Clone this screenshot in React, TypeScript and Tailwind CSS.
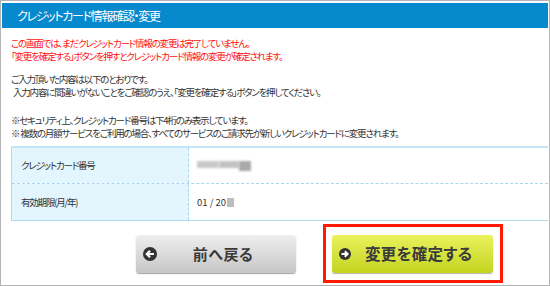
export default function App() {
  return (
    <div className="w-[550px] h-[286px] box-border border border-[#b4b4b4] px-px pt-[2px] bg-white overflow-hidden [font-family:'Noto_Sans_CJK_JP','Noto_Sans',sans-serif] [font-feature-settings:'palt']">
      {/* header */}
      <div className="h-[25px] bg-[#0789cd] flex items-center pl-[15px] text-white text-[12px] tracking-[-1.3px]">
        クレジットカード情報確認・変更
      </div>

      <div className="pl-[9px] text-[9.5px] tracking-[-1.2px]">
        <div className="mt-[9px] leading-[13px] text-[#ff1010]">
          <p>この画面では、まだクレジットカード情報の変更は完了していません。</p>
          <p>「変更を確定する」ボタンを押すとクレジットカード情報の変更が確定されます。</p>
        </div>

        <div className="mt-[10px] leading-[13px] text-[#333]">
          <p>ご入力頂いた内容は以下のとおりです。</p>
          <p className="pl-[2px]">入力内容に間違いがないことをご確認のうえ、「変更を確定する」ボタンを押してください。</p>
        </div>

        <div className="mt-[15px] leading-[13px] text-[#333]">
          <p>※セキュリティ上、クレジットカード番号は下4桁のみ表示しています。</p>
          <p>※ 複数の月額サービスをご利用の場合、すべてのサービスのご請求先が新しいクレジットカードに変更されます。</p>
        </div>

        {/* table */}
        <div className="mt-[6px] border-t-2 border-t-[#c6e4f8] border-b border-b-[#b2daf3] border-l border-l-[#b2daf3] text-[#333]">
          <div className="flex h-[36px] border-b border-dashed border-b-[#a9d5f2]">
            <div className="w-[177px] bg-[#e3f5fd] border-r border-dashed border-r-[#a9d5f2] flex items-center pl-[9px]">
              クレジットカード番号
            </div>
            <div className="flex-1 flex items-center pl-[8px]">
              <div className="flex items-start">
                <span className="w-[22px] h-[7px] bg-[#c9c9c9] blur-[1px]" />
                <span className="w-[20px] h-[7px] bg-[#c2c2c2] blur-[1px]" />
                <span className="w-[12px] h-[10px] bg-[#a9a9a9] blur-[1px]" />
              </div>
            </div>
          </div>
          <div className="flex h-[36px]">
            <div className="w-[177px] bg-[#e3f5fd] border-r border-dashed border-r-[#a9d5f2] flex items-center pl-[9px]">
              有効期限(月/年)
            </div>
            <div className="flex-1 flex items-center pl-[8px] tracking-normal">
              <span>01 / 20</span>
              <span className="ml-px w-[7px] h-[9px] bg-[#bdbdbd] blur-[0.6px]" />
            </div>
          </div>
        </div>
      </div>

      {/* buttons */}
      <div className="flex items-start pl-[134px]">
        <button className="mt-[14px] w-[160px] h-[38px] rounded-[3px] bg-gradient-to-b from-[#efefef] to-[#c6c6c6] shadow-[0_1px_1px_rgba(0,0,0,0.35)] flex items-center relative">
          <svg className="absolute left-[7px] top-[12px]" width="14" height="14" viewBox="0 0 14 14">
            <circle cx="7" cy="7" r="7" fill="#333" />
            <path d="M11 7H4.2M7 3.8L3.8 7L7 10.2" stroke="#fff" strokeWidth="2.2" fill="none" />
          </svg>
          <span className="w-full text-center pl-[14px] text-[15px] font-bold text-[#3a3a3a] tracking-[0.5px]">前へ戻る</span>
        </button>

        <div className="ml-[27px] mt-[3px] border-[3px] border-[#ff1a00] pl-[6px] pr-[7px] pt-[8px] pb-[7px]">
          <button className="w-[161px] h-[38px] rounded-[3px] bg-gradient-to-b from-[#eaf25a] to-[#c3d41a] shadow-[0_1px_1px_rgba(0,0,0,0.3)] flex items-center relative">
            <svg className="absolute left-[7px] top-[13px]" width="12" height="12" viewBox="0 0 12 12">
              <circle cx="6" cy="6" r="6" fill="#333" />
              <path d="M2.5 6H8.6M5.8 3.2L8.6 6L5.8 8.8" stroke="#fff" strokeWidth="2" fill="none" />
            </svg>
            <span className="absolute left-[33px] text-[15.5px] font-bold text-[#3a3a3a] tracking-[0.3px]">変更を確定する</span>
          </button>
        </div>
      </div>
    </div>
  );
}
